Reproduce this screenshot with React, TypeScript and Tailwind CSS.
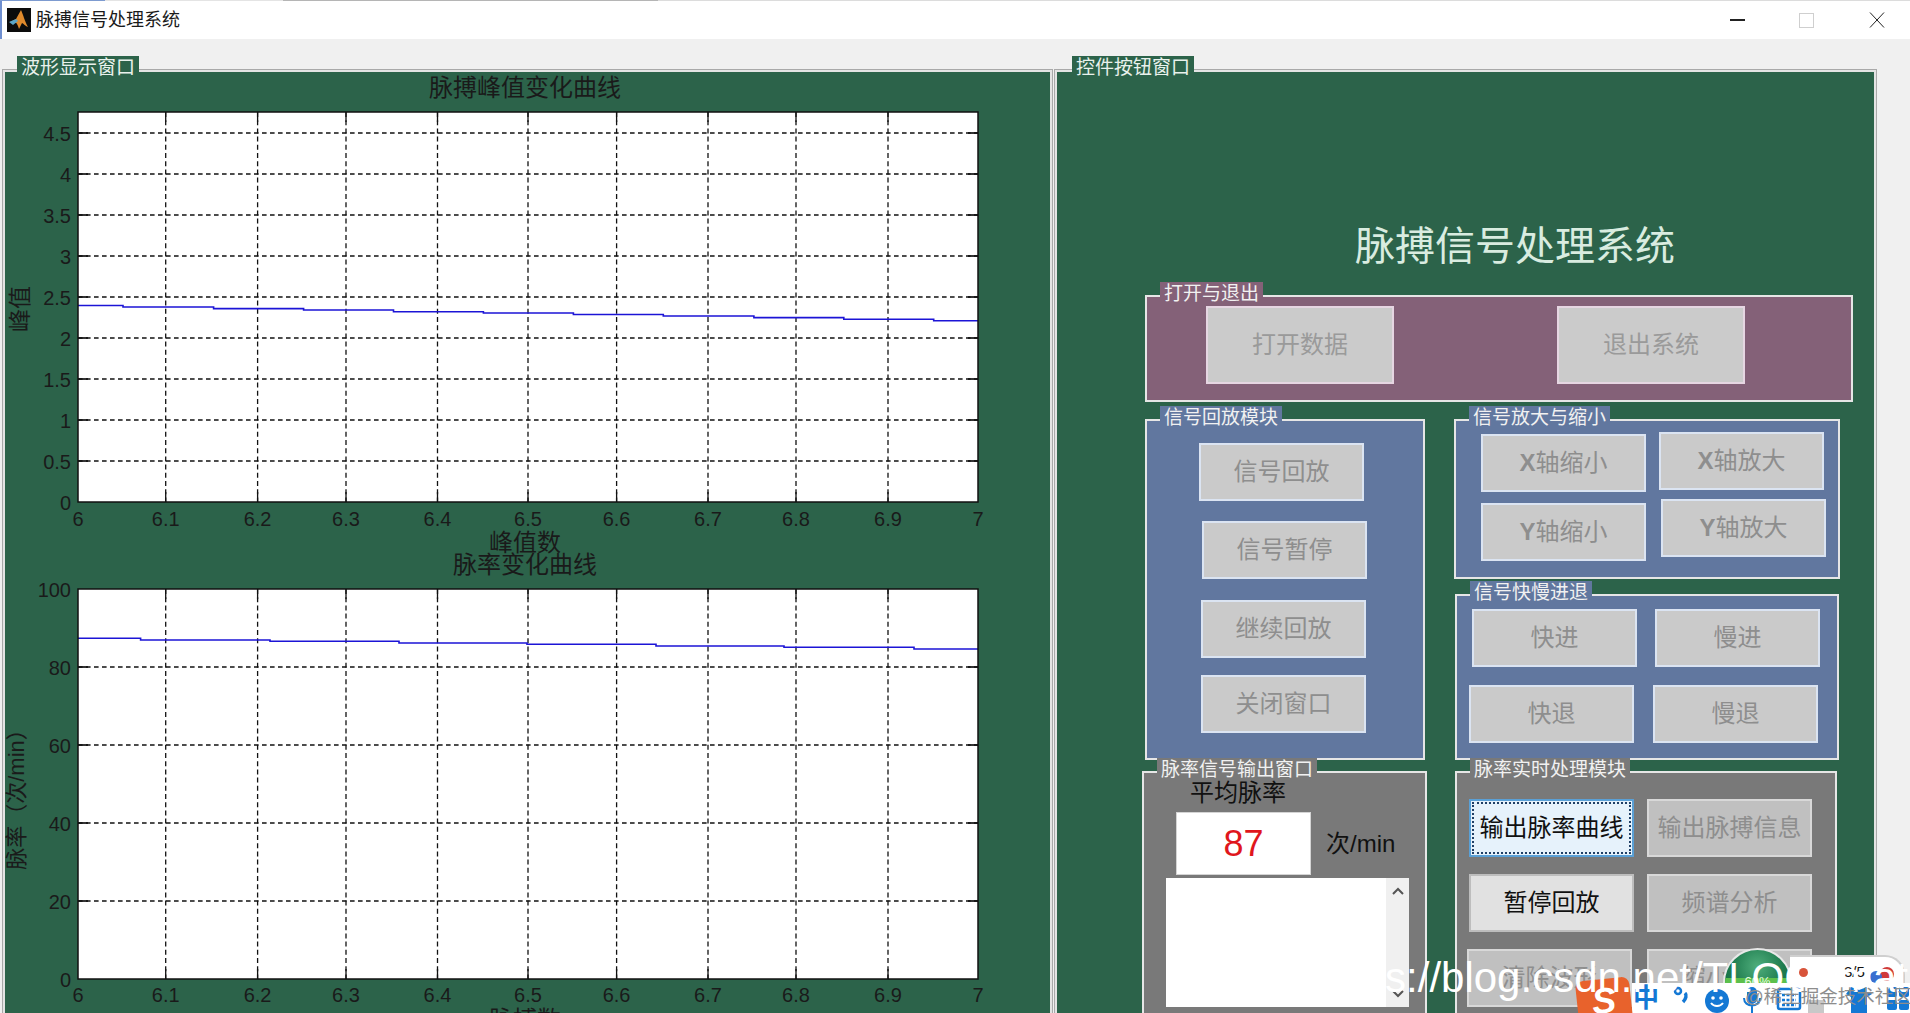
import React from "react";

const XS = [78, 165.7, 257.6, 346, 437.5, 528, 616.6, 708, 796, 888, 978];
const XL = ["6", "6.1", "6.2", "6.3", "6.4", "6.5", "6.6", "6.7", "6.8", "6.9", "7"];

type ChartProps = {
  top: number;
  bottom: number;
  vbTop: number;
  vbHeight: number;
  yTicks: { y: number; label: string }[];
  line: string;
  yLabel: string;
  yLabelX: number;
  yLabelY: number;
  yLabelSize: number;
  labelOffset: number;
};

function Chart({ top, bottom, vbTop, vbHeight, yTicks, line, yLabel, yLabelX, yLabelY, yLabelSize, labelOffset }: ChartProps) {
  const L = 78;
  const R = 978;
  return (
    <svg width={1043} height={vbHeight} viewBox={`5 ${vbTop} 1043 ${vbHeight}`} className="block shrink-0">
      <rect x={L} y={top} width={R - L} height={bottom - top} fill="#fff" />
      {yTicks.map((t) => (
        <g key={t.label}>
          {t.y > top + 1 && t.y < bottom - 1 && (
            <>
              <line x1={L} x2={R} y1={t.y} y2={t.y} stroke="#111" strokeWidth={1.7} strokeDasharray="4.6 3.4" />
              <line x1={L} x2={L + 10} y1={t.y} y2={t.y} stroke="#111" strokeWidth={1.7} />
              <line x1={R - 10} x2={R} y1={t.y} y2={t.y} stroke="#111" strokeWidth={1.7} />
            </>
          )}
          <text x={71} y={t.y + 7.5} textAnchor="end" fontSize={20} fill="#1a1a1a" fontFamily="'Liberation Sans',sans-serif">
            {t.label}
          </text>
        </g>
      ))}
      {XS.map((x, i) => (
        <g key={XL[i]}>
          {i > 0 && i < 10 && (
            <>
              <line x1={x} x2={x} y1={top} y2={bottom} stroke="#111" strokeWidth={1.3} strokeDasharray="5 3.2" />
              <line x1={x} x2={x} y1={top} y2={top + 10} stroke="#111" strokeWidth={1.3} />
              <line x1={x} x2={x} y1={bottom - 10} y2={bottom} stroke="#111" strokeWidth={1.3} />
            </>
          )}
          <text x={x} y={bottom + labelOffset} textAnchor="middle" fontSize={20} fill="#1a1a1a" fontFamily="'Liberation Sans',sans-serif">
            {XL[i]}
          </text>
        </g>
      ))}
      <path d={line} fill="none" stroke="#1c14d6" strokeWidth={1.6} />
      <rect x={L} y={top} width={R - L} height={bottom - top} fill="none" stroke="#111" strokeWidth={1.5} />
      <text
        x={yLabelX}
        y={yLabelY}
        textAnchor="middle"
        fontSize={yLabelSize}
        fill="#1a1a1a"
        transform={`rotate(-90 ${yLabelX} ${yLabelY})`}
        fontFamily="'Liberation Sans','Noto Sans CJK SC',sans-serif"
      >
        {yLabel}
      </text>
    </svg>
  );
}

function GroupBox({
  title,
  className,
  legendClass,
  children,
}: {
  title: string;
  className: string;
  legendClass: string;
  children?: React.ReactNode;
}) {
  return (
    <div className={`relative shrink-0 border-2 border-[#e6e6e6] ${className}`}>
      <div className={`absolute -top-[15px] left-[13px] h-[21px] whitespace-nowrap px-[4px] text-[19px] leading-[23px] text-[#f1f1f1] ${legendClass}`}>
        {title}
      </div>
      {children}
    </div>
  );
}

function Btn({ label, className }: { label: React.ReactNode; className: string }) {
  return (
    <button
      type="button"
      className={`flex h-[58px] w-[165px] shrink-0 items-center justify-center border-2 text-[24px] leading-none ${className}`}
    >
      {label}
    </button>
  );
}

const BLUE_BTN = "border-[#dbe4f2] bg-[#cacaca] text-[#8e8e8e]";
const GRAY_BTN = "border-[#d8d8d8] bg-[#c0c0c0] text-[#8e8e8e]";

function Icons() {
  return (
    <div className="absolute bottom-0 right-0 h-[30px] w-[278px] bg-white">
      <svg width="278" height="30" viewBox="0 0 278 30" className="block">
        <text x="1" y="24" fontSize="26" fontWeight="700" fill="#1478d4" fontFamily="'Noto Sans CJK SC',sans-serif">
          中
        </text>
        <circle cx="46" cy="8" r="3" fill="none" stroke="#1478d4" strokeWidth="2.5" />
        <path d="M53 10c2 2 1 6-2 9" fill="none" stroke="#1478d4" strokeWidth="3.5" />
        <circle cx="85" cy="18" r="12" fill="#1478d4" />
        <circle cx="81" cy="15" r="1.8" fill="#fff" />
        <circle cx="89" cy="15" r="1.8" fill="#fff" />
        <path d="M79 20c3 4 9 4 12 0" fill="none" stroke="#fff" strokeWidth="2" />
        <rect x="115" y="4" width="10" height="17" rx="5" fill="#1478d4" />
        <path d="M112 15c0 10 16 10 16 0M120 23v7" fill="none" stroke="#1478d4" strokeWidth="2" />
        <rect x="146" y="6" width="22" height="20" rx="2" fill="none" stroke="#1478d4" strokeWidth="2.5" />
        <path d="M150 12h14M150 17h14M150 22h14" stroke="#1478d4" strokeWidth="2.5" strokeDasharray="3 1.5" />
        <rect x="176" y="17" width="16" height="13" fill="#c8c8c8" />
        <path d="M219 4l8 3 8-3 5 7-5 3v16h-16V14l-5-3z" fill="#1478d4" />
        <rect x="255" y="4" width="10" height="10" rx="2" fill="#1478d4" />
        <rect x="267" y="4" width="10" height="10" rx="2" fill="#1478d4" />
        <rect x="255" y="17" width="10" height="10" rx="2" fill="#1478d4" />
        <rect x="267" y="17" width="10" height="10" rx="2" fill="#1478d4" />
      </svg>
    </div>
  );
}

export default function App() {
  const yTicks1 = [
    { y: 502, label: "0" },
    { y: 461, label: "0.5" },
    { y: 420, label: "1" },
    { y: 379, label: "1.5" },
    { y: 338, label: "2" },
    { y: 297, label: "2.5" },
    { y: 256, label: "3" },
    { y: 215, label: "3.5" },
    { y: 174, label: "4" },
    { y: 133, label: "4.5" },
  ];
  const yTicks2 = [
    { y: 979, label: "0" },
    { y: 901, label: "20" },
    { y: 823, label: "40" },
    { y: 745, label: "60" },
    { y: 667, label: "80" },
    { y: 589, label: "100" },
  ];
  const line1 =
    "M78 305.5H123V307H213.6V308.6H303.6V310H393.5V311.7H483.4V313H573.4V314.5H663.3V316H753.9V317.6H843.8V319.3H933.7V320.7H978";
  const line2 = "M78 638.3H140.6V640H270V641.3H399V643H527V644.3H656V646H784V647.3H914V649H978";

  return (
    <div className="relative h-[1013px] w-[1910px] overflow-hidden bg-[#f0f0f0] [font-family:'Liberation_Sans','Noto_Sans_CJK_SC',sans-serif]">
      {/* title bar */}
      <div className="flex h-[1px] w-full">
        <div className="h-full w-[105px] bg-[#7d9bd0]" />
        <div className="h-full w-[178px] bg-[#e4e4e4]" />
        <div className="h-full w-[375px] bg-[#b5b5b5]" />
        <div className="h-full flex-1 bg-[#dcdcdc]" />
      </div>
      <div className="flex h-[38px] items-center border-l-2 border-[#6f8fd0] bg-white pl-[5px] pr-[25px]">
        <svg width="24" height="24" viewBox="0 0 24 24" className="shrink-0">
          <rect width="24" height="24" fill="#0c0c0c" />
          <path d="M3 14l6-3 5-9c2 4 4 12 7 17-3-1-5-4-6-4l-3 6c-1-3-2-6-3-6z" fill="#e08a2c" />
          <path d="M2 14l7-3 2 2-5 4z" fill="#5aa6c8" />
        </svg>
        <span className="ml-[5px] text-[18px] leading-none text-[#1a1a1a]">脉搏信号处理系统</span>
        <div className="ml-auto flex items-center">
          <div className="h-[1.5px] w-[15px] bg-[#222]" />
          <div className="ml-[54px] h-[15px] w-[15px] border border-[#cfcfcf]" />
          <svg width="16" height="16" viewBox="0 0 16 16" className="ml-[55px]">
            <path d="M1 0.5L15 15.5M15 0.5L1 15.5" stroke="#222" strokeWidth="1" fill="none" />
          </svg>
        </div>
      </div>

      <div className="flex items-start pl-[3px] pt-[31px]">
        {/* left panel */}
        <div className="relative h-[1000px] w-[1049px] shrink-0 border-2 border-[#e4e4e4] bg-[#2c634a] text-[#1a1a1a] outline outline-1 outline-[#a9a9a9]">
          <div className="absolute -top-[16px] left-[12px] h-[20px] whitespace-nowrap bg-[#2c634a] px-[4px] text-[19px] leading-[23px] text-[#e9f1ec]">
            波形显示窗口
          </div>
          <div className="h-[32px] w-[1040px] text-center text-[24px] leading-[32px]">脉搏峰值变化曲线</div>
          <Chart
            top={112}
            bottom={502}
            vbTop={104}
            vbHeight={426}
            yTicks={yTicks1}
            line={line1}
            yLabel="峰值"
            yLabelX={28}
            yLabelY={309}
            yLabelSize={23}
            labelOffset={24}
          />
          <div className="h-[26px] w-[1040px] text-center text-[24px] leading-[26px]">峰值数</div>
          <div className="h-[18px] w-[1040px] text-center text-[24px] leading-[18px]">脉率变化曲线</div>
          <Chart
            top={589}
            bottom={979}
            vbTop={574}
            vbHeight={430}
            yTicks={yTicks2}
            line={line2}
            yLabel="脉率（次/min）"
            yLabelX={24}
            yLabelY={794}
            yLabelSize={22}
            labelOffset={23}
          />
          <div className="h-[32px] w-[1040px] text-center text-[24px] leading-[32px]">脉搏数</div>
        </div>

        {/* right panel */}
        <div className="relative ml-[3px] h-[1000px] w-[821px] shrink-0 border-2 border-[#e4e4e4] bg-[#2c634a] outline outline-1 outline-[#a9a9a9]">
          <div className="absolute -top-[16px] left-[15px] h-[21px] whitespace-nowrap bg-[#2c634a] px-[4px] text-[19px] leading-[23px] text-[#e9f1ec]">
            控件按钮窗口
          </div>

          <div className="ml-[298px] h-[223px] whitespace-nowrap pt-[150px] text-[40px] leading-[48px] text-[#d9ece0]">
            脉搏信号处理系统
          </div>

          {/* open & exit */}
          <GroupBox title="打开与退出" legendClass="bg-[#846178]" className="ml-[88px] flex h-[107px] w-[708px] items-start bg-[#846178] pt-[9px]">
            <Btn label="打开数据" className="ml-[59px] h-[78px] w-[188px] border-[#e6d6e2] bg-[#cbcbcb] text-[#9a9a9a]" />
            <Btn label="退出系统" className="ml-[163px] h-[78px] w-[188px] border-[#e6d6e2] bg-[#cbcbcb] text-[#9a9a9a]" />
          </GroupBox>

          <div className="ml-[88px] mt-[17px] flex items-start">
            <GroupBox title="信号回放模块" legendClass="bg-[#61779f]" className="flex h-[341px] w-[280px] flex-col items-start bg-[#61779f]">
              <Btn label="信号回放" className={`ml-[52px] mt-[22px] ${BLUE_BTN}`} />
              <Btn label="信号暂停" className={`ml-[55px] mt-[20px] ${BLUE_BTN}`} />
              <Btn label="继续回放" className={`ml-[54px] mt-[21px] ${BLUE_BTN}`} />
              <Btn label="关闭窗口" className={`ml-[54px] mt-[17px] ${BLUE_BTN}`} />
            </GroupBox>

            <div className="ml-[29px] flex flex-col items-start">
              <GroupBox title="信号放大与缩小" legendClass="bg-[#61779f]" className="flex h-[160px] w-[386px] items-start bg-[#61779f]">
                <div className="ml-[25px] mt-[13px] flex flex-col gap-[11px]">
                  <Btn label={<><b>X</b>轴缩小</>} className={BLUE_BTN} />
                  <Btn label={<><b>Y</b>轴缩小</>} className={BLUE_BTN} />
                </div>
                <div className="ml-[13px] mt-[11px] flex flex-col items-start gap-[9px]">
                  <Btn label={<><b>X</b>轴放大</>} className={BLUE_BTN} />
                  <Btn label={<><b>Y</b>轴放大</>} className={`ml-[2px] ${BLUE_BTN}`} />
                </div>
              </GroupBox>
              <GroupBox title="信号快慢进退" legendClass="bg-[#61779f]" className="ml-[1px] mt-[15px] h-[166px] w-[384px] bg-[#61779f]">
                <div className="ml-[15px] mt-[13px] flex gap-[18px]">
                  <Btn label="快进" className={BLUE_BTN} />
                  <Btn label="慢进" className={BLUE_BTN} />
                </div>
                <div className="ml-[12px] mt-[18px] flex gap-[19px]">
                  <Btn label="快退" className={BLUE_BTN} />
                  <Btn label="慢退" className={BLUE_BTN} />
                </div>
              </GroupBox>
            </div>
          </div>

          <div className="ml-[85px] mt-[11px] flex items-start">
            <GroupBox title="脉率信号输出窗口" legendClass="bg-[#797979]" className="h-[300px] w-[285px] bg-[#797979]">
              <div className="ml-[46px] mt-[5px] h-[30px] text-[24px] leading-[30px] text-[#111]">平均脉率</div>
              <div className="ml-[32px] mt-[4px] flex items-center">
                <div className="flex h-[63px] w-[135px] items-center justify-center border border-[#d4d4d4] bg-white text-[36px] leading-none text-[#e0161c]">
                  87
                </div>
                <div className="ml-[15px] text-[24px] leading-none text-[#111]">次/min</div>
              </div>
              <div className="ml-[22px] mt-[3px] flex h-[129px] w-[243px] bg-white">
                <div className="ml-auto flex w-[23px] flex-col items-center justify-between bg-[#f0f0f0] py-[9px]">
                  <svg width="12" height="8" viewBox="0 0 12 8">
                    <path d="M1 7l5-5 5 5" fill="none" stroke="#555" strokeWidth="2" />
                  </svg>
                  <svg width="12" height="8" viewBox="0 0 12 8">
                    <path d="M1 1l5 5 5-5" fill="none" stroke="#555" strokeWidth="2" />
                  </svg>
                </div>
              </div>
            </GroupBox>

            <GroupBox title="脉率实时处理模块" legendClass="bg-[#797979]" className="ml-[28px] h-[300px] w-[382px] bg-[#797979]">
              <div className="ml-[12px] mt-[26px] flex gap-[13px]">
                <button
                  type="button"
                  className="h-[58px] w-[165px] shrink-0 border-2 border-[#5aa0d6] bg-[#e6f2fb] p-[1px] text-[24px] leading-none text-[#111]"
                >
                  <span className="flex h-full w-full items-center justify-center whitespace-nowrap border-2 border-dotted border-[#1f3f66]">
                    输出脉率曲线
                  </span>
                </button>
                <Btn label="输出脉搏信息" className={GRAY_BTN} />
              </div>
              <div className="ml-[12px] mt-[17px] flex gap-[13px]">
                <Btn label="暂停回放" className="border-[#bdbdbd] bg-[#e1e1e1] text-[#111]" />
                <Btn label="频谱分析" className={GRAY_BTN} />
              </div>
              <div className="ml-[10px] mt-[17px] flex gap-[15px]">
                <Btn label="清除波形" className={GRAY_BTN} />
                <Btn label="缩小波形" className={GRAY_BTN} />
              </div>
            </GroupBox>
          </div>
        </div>
      </div>

      {/* screenshot overlays: balloon, IME bar, watermarks */}
      <div className="absolute left-[1723px] top-[948px] h-[70px] w-[69px] overflow-hidden rounded-full border-2 border-[#e8e8e8] bg-[radial-gradient(circle_at_50%_25%,#4fae7c_0%,#1d7a4d_45%,#0f5c38_100%)]">
        <div className="mt-[28px] h-[7px] w-full bg-[#5cc04c] text-center text-[13px] leading-[7px] text-[#e6ffe0]">60%</div>
      </div>
      <div className="absolute left-[1790px] top-[955px] h-[30px] w-[115px] rounded-tr-[20px] border-r-2 border-t-2 border-[#cfcfcf] bg-white">
        <div className="absolute left-[9px] top-[11px] h-[9px] w-[9px] rounded-full bg-[#d8543a]" />
        <div className="absolute left-[54px] top-[6px] text-[15px] leading-[18px] text-[#111]">3/5</div>
        <div className="absolute left-[90px] top-[10px] h-[14px] w-[14px] rounded-full bg-[#d03a3a]" />
        <div className="absolute left-[80px] top-[14px] h-[12px] w-[12px] rounded-full bg-[#3a6fd0]" />
      </div>
      <Icons />
      <div className="absolute left-[1577px] top-[979px] flex h-[44px] w-[54px] -rotate-6 items-center justify-center rounded-[8px] bg-[#e8622c] text-[36px] font-bold italic leading-none text-white">
        S
      </div>
      <div className="absolute left-[1315px] top-[954px] whitespace-nowrap text-[42px] leading-[48px] text-white">
        https://blog.csdn.net/TLOC_math
      </div>
      <div className="absolute left-[1745px] top-[984px] whitespace-nowrap text-[18.5px] leading-[26px] text-[#8d8d8d]">
        @稀土掘金技术社区
      </div>
    </div>
  );
}
